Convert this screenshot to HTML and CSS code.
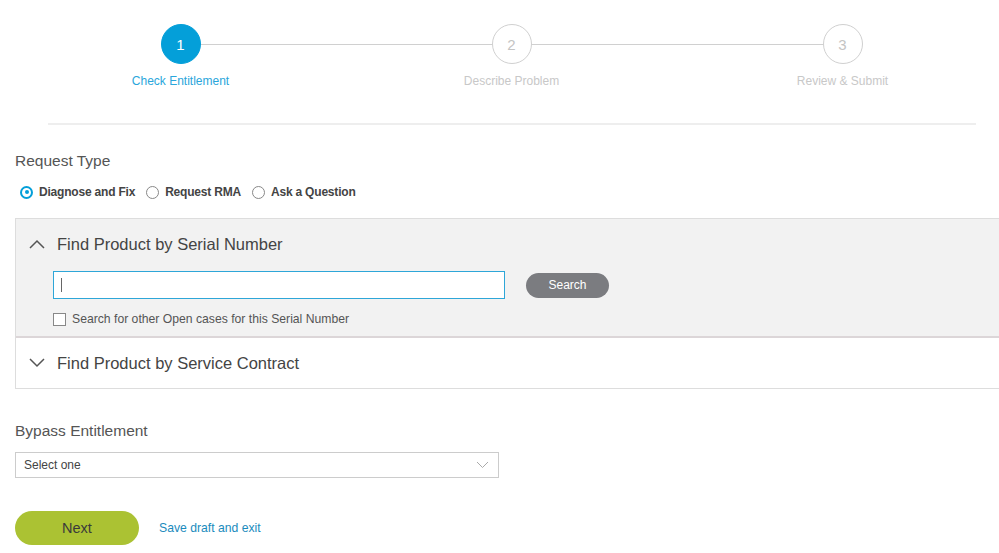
FILE: index.html
```html
<!DOCTYPE html>
<html lang="en">
<head>
    <meta charset="UTF-8">
    <meta name="viewport" content="width=device-width, initial-scale=1.0">
    <title>Open a Case</title>
    <link rel="stylesheet" href="styles.css">
</head>
<body>
    <div class="page">
        <div class="steps">
            <div class="step active">
                <div class="circle">1</div>
                <div class="label">Check Entitlement</div>
            </div>
            <div class="step">
                <div class="circle">2</div>
                <div class="label">Describe Problem</div>
            </div>
            <div class="step">
                <div class="circle">3</div>
                <div class="label">Review &amp; Submit</div>
            </div>
        </div>
        <div class="divider"></div>

        <div class="section-title">Request Type</div>
        <div class="radios">
            <label class="radio checked"><span class="ring"></span>Diagnose and Fix</label>
            <label class="radio"><span class="ring"></span>Request RMA</label>
            <label class="radio"><span class="ring"></span>Ask a Question</label>
        </div>

        <div class="panel">
            <div class="pane open">
                <div class="pane-head">
                    <svg class="chev" width="16" height="10" viewBox="0 0 16 10"><polyline points="1,9 8,2 15,9" fill="none" stroke="#555" stroke-width="1.5"/></svg>
                    <span>Find Product by Serial Number</span>
                </div>
                <div class="pane-body">
                    <div class="search-row">
                        <div class="serial-input"><span class="caret"></span></div>
                        <button class="btn-search">Search</button>
                    </div>
                    <label class="check"><span class="box"></span>Search for other Open cases for this Serial Number</label>
                </div>
            </div>
            <div class="pane">
                <div class="pane-head">
                    <svg class="chev" width="16" height="10" viewBox="0 0 16 10"><polyline points="1,1 8,8 15,1" fill="none" stroke="#555" stroke-width="1.5"/></svg>
                    <span>Find Product by Service Contract</span>
                </div>
            </div>
        </div>

        <div class="section-title bypass">Bypass Entitlement</div>
        <div class="select">
            <span>Select one</span>
            <svg width="13" height="8" viewBox="0 0 13 8"><polyline points="1,1 6.5,6.5 12,1" fill="none" stroke="#aaa" stroke-width="1"/></svg>
        </div>

        <div class="actions">
            <button class="btn-next">Next</button>
            <a href="#" class="link">Save draft and exit</a>
        </div>
    </div>
</body>
</html>
```

FILE: styles.css
```css
body {
    margin: 0;
    background: #fff;
    font-family: "Liberation Sans", Arial, sans-serif;
    color: #444;
    overflow: hidden;
}

.page {
    padding-left: 15px;
}

/* stepper */
.steps {
    display: flex;
    width: 993px;
    padding-top: 24px;
}

.step {
    flex: 1;
    display: flex;
    flex-direction: column;
    align-items: center;
    position: relative;
}

.step::before {
    content: "";
    position: absolute;
    top: 20px;
    left: 50%;
    width: 100%;
    border-top: 1px solid #d0d0d0;
}

.step:last-child::before {
    display: none;
}

.circle {
    position: relative;
    width: 38px;
    height: 38px;
    border: 1px solid #d0d0d0;
    border-radius: 50%;
    background: #fff;
    color: #c4c4c4;
    font-size: 15px;
    display: flex;
    align-items: center;
    justify-content: center;
}

.label {
    margin-top: 10px;
    font-size: 12px;
    line-height: 15px;
    color: #c8c8c8;
}

.step.active .circle {
    background: #049fd9;
    border-color: #049fd9;
    color: #fff;
}

.step.active .label {
    color: #2aa6db;
}

.divider {
    height: 2px;
    background: #eeeeee;
    margin: 34px 23px 0 33px;
}

/* request type */
.section-title {
    margin-top: 27px;
    font-size: 15.5px;
    line-height: 18px;
    color: #555;
}

.radios {
    display: flex;
    gap: 11px;
    margin-top: 14px;
    padding-left: 5px;
}

.radio {
    display: flex;
    align-items: center;
    font-size: 12px;
    letter-spacing: -0.2px;
    font-weight: bold;
    line-height: 16px;
    color: #444;
}

.ring {
    width: 11px;
    height: 11px;
    border: 1px solid #888;
    border-radius: 50%;
    margin-right: 6px;
    position: relative;
}

.radio.checked .ring {
    border: 2px solid #049fd9;
    width: 9px;
    height: 9px;
}

.radio.checked .ring::after {
    content: "";
    position: absolute;
    left: 2.5px;
    top: 2.5px;
    width: 4px;
    height: 4px;
    border-radius: 50%;
    background: #049fd9;
}

/* accordion */
.panel {
    margin-top: 18px;
    margin-right: -20px;
    border: 1px solid #dddddd;
}

.pane + .pane {
    border-top: 2px solid #dcd6d8;
}

.pane.open {
    background: #f2f2f2;
}

.pane-head {
    height: 50px;
    display: flex;
    align-items: center;
    padding-left: 13px;
    font-size: 16.5px;
    color: #444;
}

.chev {
    margin-right: 12px;
}

.pane-body {
    padding: 2px 0 9px 37px;
}

.search-row {
    display: flex;
    align-items: center;
    gap: 21px;
}

.serial-input {
    width: 443px;
    height: 26px;
    border: 1px solid #2ea6d8;
    background: #fff;
    display: flex;
    align-items: center;
    padding-left: 7px;
    box-sizing: content-box;
}

.caret {
    width: 1px;
    height: 14px;
    background: #666;
}

.btn-search {
    width: 83px;
    height: 25px;
    border: none;
    border-radius: 13px;
    background: #7b7c80;
    color: #fff;
    font-family: "Liberation Sans", Arial, sans-serif;
    font-size: 12px;
}

.check {
    display: flex;
    align-items: center;
    margin-top: 12px;
    font-size: 12.2px;
    line-height: 16px;
    color: #555;
}

.box {
    width: 11px;
    height: 11px;
    border: 1px solid #888;
    background: #fff;
    margin-right: 6px;
}

/* bypass */
.section-title.bypass {
    margin-top: 33px;
}

.select {
    width: 465px;
    height: 24px;
    margin-top: 12px;
    border: 1px solid #cccccc;
    display: flex;
    align-items: center;
    justify-content: space-between;
    padding: 0 9px 0 8px;
    box-sizing: content-box;
    font-size: 12px;
    color: #444;
}

/* actions */
.actions {
    display: flex;
    align-items: center;
    gap: 20px;
    margin-top: 33px;
}

.btn-next {
    width: 124px;
    height: 34px;
    border: none;
    border-radius: 17px;
    background: #abc233;
    color: #3a3a3a;
    font-family: "Liberation Sans", Arial, sans-serif;
    font-size: 14.5px;
}

.link {
    color: #1b8bbd;
    font-size: 12.2px;
    text-decoration: none;
}
```
